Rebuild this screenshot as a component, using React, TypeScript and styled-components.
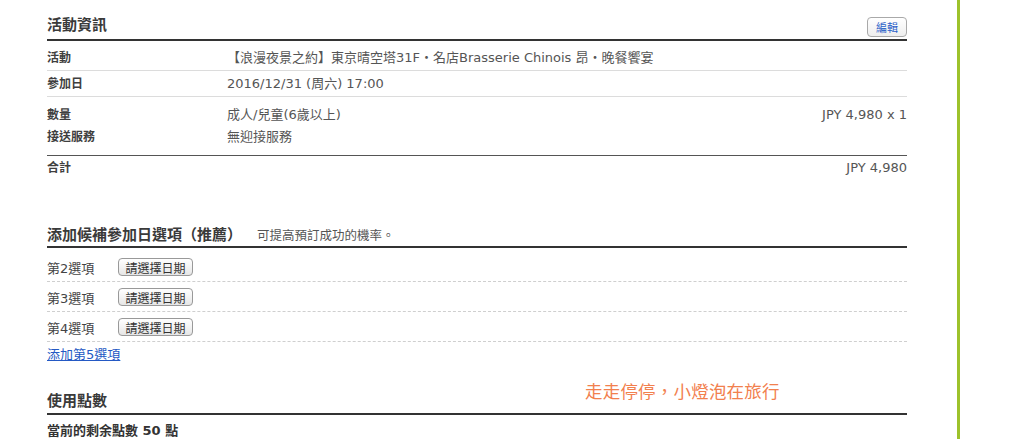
import React from "react";
import styled, { createGlobalStyle, css } from "styled-components";

const GlobalStyle = createGlobalStyle`
  html, body {
    margin: 0;
    padding: 0;
    background: #fff;
  }
  body {
    font-family: "DejaVu Sans", "Noto Sans CJK TC", sans-serif;
    color: #555;
  }
`;

const Page = styled.div`
  position: relative;
  display: flex;
  height: 100vh;
  min-height: 439px;
  overflow: hidden;
`;

const Main = styled.div`
  width: 860px;
  margin-left: 47px;
  padding-top: 15px;
`;

const Divider = styled.div`
  width: 3px;
  margin-left: 50px;
  align-self: stretch;
  background: #9dc22b;
`;

const Section = styled.section<{ $mt?: number }>`
  margin-top: ${({ $mt }) => $mt || 0}px;
`;

const SectionHeader = styled.div<{ $pb: number }>`
  display: flex;
  align-items: flex-end;
  justify-content: space-between;
  padding-bottom: ${({ $pb }) => $pb}px;
  border-bottom: 2px solid #333;
`;

const TitleWrap = styled.div`
  display: flex;
  align-items: baseline;
`;

const Title = styled.h2`
  margin: 0;
  font-size: 15px;
  line-height: 20px;
  font-weight: bold;
  color: #3a3a3a;
`;

const Subtitle = styled.span`
  margin-left: 15px;
  font-size: 12.5px;
  color: #555;
`;

const EditButton = styled.button`
  width: 40px;
  height: 20px;
  margin-bottom: -2px;
  padding: 0;
  font-family: inherit;
  font-size: 11px;
  color: #2a5fc8;
  background: linear-gradient(#ffffff, #eeeeee);
  border: 1px solid #a9a9a9;
  border-radius: 4px;
  cursor: pointer;
`;

const InfoRow = styled.div<{
  $pt: number;
  $pb: number;
  $lh?: number;
  $border?: "light" | "dark";
}>`
  display: grid;
  grid-template-columns: 180px 1fr auto;
  padding: ${({ $pt, $pb }) => `${$pt}px 0 ${$pb}px`};
  font-size: 13px;
  line-height: ${({ $lh }) => $lh || 14}px;
  ${({ $border }) =>
    $border === "light" &&
    css`
      border-bottom: 1px solid #dcdcdc;
    `}
  ${({ $border }) =>
    $border === "dark" &&
    css`
      border-bottom: 1px solid #555;
    `}
`;

const Label = styled.div`
  font-weight: bold;
  font-size: 12px;
  color: #3f3f3f;
`;

const Value = styled.div`
  color: #555;
  white-space: nowrap;
`;

const Amount = styled.div`
  color: #555;
  text-align: right;
`;

const OptionList = styled.div`
  padding-top: 4px;
`;

const OptionRow = styled.div`
  display: flex;
  align-items: center;
  height: 20px;
  padding: 5px 0 4px;
  border-bottom: 1px dashed #cfcfcf;
`;

const OptionLabel = styled.div`
  width: 71px;
  font-size: 13px;
  color: #444;
`;

const DateButton = styled.button`
  width: 75px;
  height: 18px;
  padding: 0;
  font-family: inherit;
  font-size: 12px;
  color: #333;
  background: linear-gradient(#ffffff, #e6e6e6);
  border: 1px solid #999;
  border-radius: 4px;
  cursor: pointer;
`;

const AddLink = styled.a`
  display: inline-block;
  padding-top: 6px;
  font-size: 13px;
  line-height: 14px;
  color: #2459c4;
  text-decoration: underline;
`;

const PointsText = styled.div`
  padding-top: 9px;
  font-size: 13px;
  line-height: 14px;
  font-weight: bold;
  color: #333;
`;

const Watermark = styled.div`
  position: absolute;
  left: 585px;
  top: 381px;
  font-size: 17.5px;
  line-height: 22px;
  color: #f2804e;
  letter-spacing: 0.2px;
`;

const options = ["第2選項", "第3選項", "第4選項"];

export default function App() {
  return (
    <>
      <GlobalStyle />
      <Page>
        <Main>
          <Section>
            <SectionHeader $pb={4}>
              <Title>活動資訊</Title>
              <EditButton>編輯</EditButton>
            </SectionHeader>
            <InfoRow $pt={10} $pb={5} $border="light">
              <Label>活動</Label>
              <Value>【浪漫夜景之約】東京晴空塔31F・名店Brasserie Chinois 昂・晚餐饗宴</Value>
              <Amount />
            </InfoRow>
            <InfoRow $pt={6} $pb={5} $border="light">
              <Label>參加日</Label>
              <Value>2016/12/31 (周六) 17:00</Value>
              <Amount />
            </InfoRow>
            <InfoRow $pt={7} $pb={0} $lh={22}>
              <Label>數量</Label>
              <Value>成人/兒童(6歲以上)</Value>
              <Amount>JPY 4,980 x 1</Amount>
            </InfoRow>
            <InfoRow $pt={0} $pb={7} $lh={22} $border="dark">
              <Label>接送服務</Label>
              <Value>無迎接服務</Value>
              <Amount />
            </InfoRow>
            <InfoRow $pt={5} $pb={5}>
              <Label>合計</Label>
              <Value />
              <Amount>JPY 4,980</Amount>
            </InfoRow>
          </Section>

          <Section $mt={45}>
            <SectionHeader $pb={1}>
              <TitleWrap>
                <Title>添加候補參加日選項（推薦）</Title>
                <Subtitle>可提高預訂成功的機率。</Subtitle>
              </TitleWrap>
            </SectionHeader>
            <OptionList>
              {options.map((o) => (
                <OptionRow key={o}>
                  <OptionLabel>{o}</OptionLabel>
                  <DateButton>請選擇日期</DateButton>
                </OptionRow>
              ))}
            </OptionList>
            <AddLink href="#">添加第5選項</AddLink>
          </Section>

          <Section $mt={28}>
            <SectionHeader $pb={2}>
              <Title>使用點數</Title>
            </SectionHeader>
            <PointsText>當前的剩余點數 50 點</PointsText>
          </Section>
        </Main>
        <Divider />
        <Watermark>走走停停，小燈泡在旅行</Watermark>
      </Page>
    </>
  );
}
